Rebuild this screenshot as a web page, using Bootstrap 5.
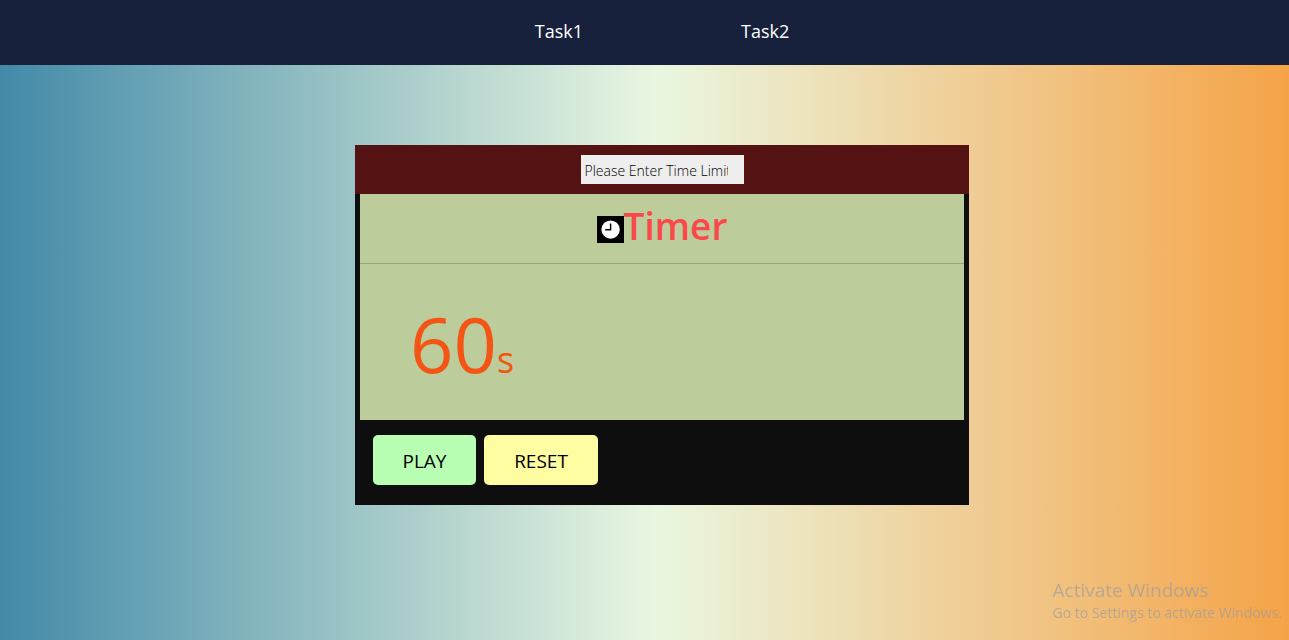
<!DOCTYPE html>
<html lang="en">
<head>
<meta charset="utf-8">
<meta name="viewport" content="width=device-width, initial-scale=1">
<title>Timer</title>
<link href="https://cdn.jsdelivr.net/npm/bootstrap@5.3.0/dist/css/bootstrap.min.css" rel="stylesheet">
<style>
  body {
    font-family: "Open Sans", "Noto Sans", sans-serif;
    background: linear-gradient(to right, #438aa8, #eaf7e1 51%, #f5a347);
  }
  .site-nav { background: #17213c; height: 65px; padding: 19px 0 0 35px; }
  .site-nav ul { gap: 158px; }
  .site-nav a { color: #fff; font-size: 18px; line-height: 24px; }
  .stage { padding: 80px 0 0 35px; }
  .timer-box { width: 614px; max-width: 100%; background: #0e0e0e; }
  .limit-bar { background: #541212; padding: 10px; }
  .limit-input {
    width: 163px; height: 29px; padding: 2px 16px 0 4px;
    background: #eee; color: #000; font-size: 14px; font-weight: 300;
  }
  .limit-input::placeholder { color: #000; opacity: 1; }
  .timer-face { background: #bccc9a; margin: 0 5px; height: 226px; }
  .timer-title {
    height: 70px; border-bottom: 1px solid #97a47c;
    color: #fb484b; font-size: 37px; font-weight: 600; line-height: 64px;
  }
  .clock { width: 27px; height: 27px; margin-top: 22px; }
  .readout { color: #f45514; padding: 26px 0 0 50px; line-height: 108px; font-size: 76px; }
  .readout small { font-size: 36px; }
  .controls { padding: 15px 18px 20px; gap: 8px; }
  .timer-btn { height: 50px; padding: 2px 0 0; border: 0; border-radius: 5px; color: #000; font-size: 19px; }
  .btn-play { width: 103px; background: #b9ffb3; }
  .btn-reset { width: 114px; background: #fffda1; }
  .os-notice { color: #999ca3; opacity: .65; right: 7px; bottom: 17px; }
  .notice-title { font-size: 19px; line-height: 26px; }
  .notice-text { font-size: 14px; line-height: 20px; }
</style>
</head>
<body class="min-vh-100">
<nav class="site-nav">
  <ul class="list-unstyled d-flex justify-content-center mb-0">
    <li><a class="text-decoration-none d-block" href="#task1">Task1</a></li>
    <li><a class="text-decoration-none d-block" href="#task2">Task2</a></li>
  </ul>
</nav>
<main class="stage d-flex justify-content-center">
  <section class="timer-box">
    <div class="limit-bar d-flex justify-content-center">
      <input class="limit-input border-0 rounded-0" type="text" aria-label="Time limit" placeholder="Please Enter Time Limit">
    </div>
    <div class="timer-face">
      <h1 class="timer-title d-flex justify-content-center mb-0">
        <svg class="clock" viewBox="0 0 27 27" aria-hidden="true">
          <rect width="27" height="27" fill="#000"/>
          <circle cx="13.6" cy="13.6" r="9.2" fill="#fff"/>
          <path d="M13.6 7.5v6.3H8.2" fill="none" stroke="#000" stroke-width="1.4"/>
        </svg>
        <span>Timer</span>
      </h1>
      <div class="readout">60<small>s</small></div>
    </div>
    <div class="controls d-flex">
      <button class="btn timer-btn btn-play" type="button">PLAY</button>
      <button class="btn timer-btn btn-reset" type="button">RESET</button>
    </div>
  </section>
</main>
<aside class="os-notice position-fixed">
  <div class="notice-title">Activate Windows</div>
  <div class="notice-text">Go to Settings to activate Windows.</div>
</aside>
<script src="https://cdn.jsdelivr.net/npm/bootstrap@5.3.0/dist/js/bootstrap.bundle.min.js"></script>
</body>
</html>
